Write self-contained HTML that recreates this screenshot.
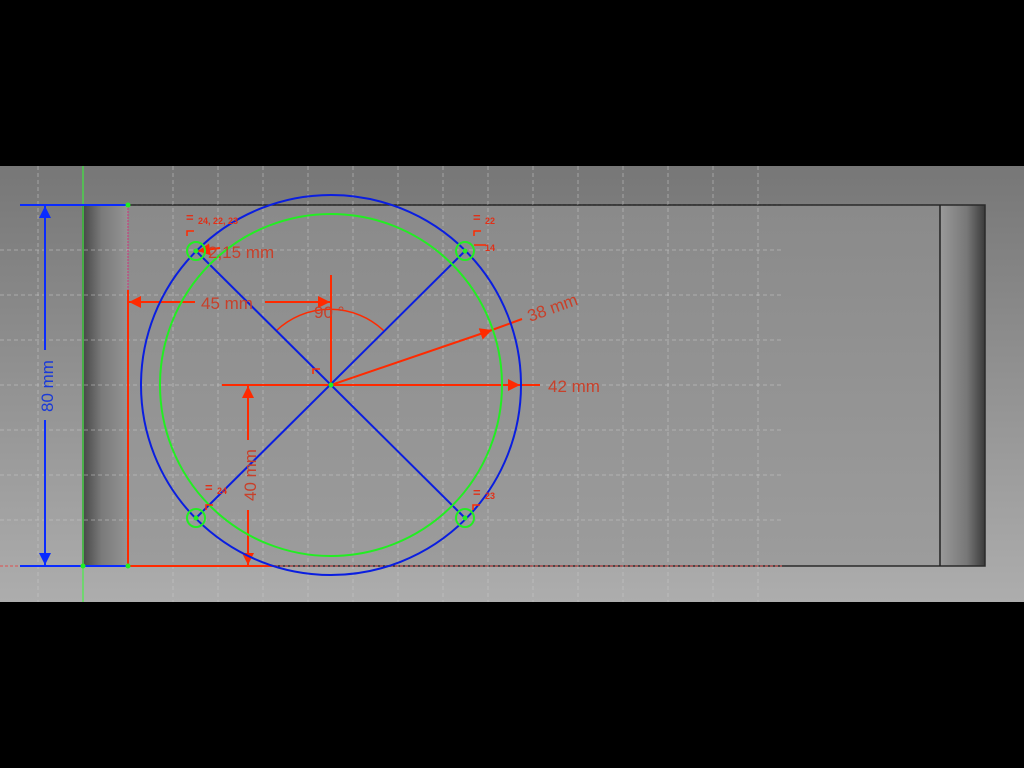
<!DOCTYPE html>
<html><head><meta charset="utf-8"><style>
html,body{margin:0;padding:0;background:#000;width:1024px;height:768px;overflow:hidden}
svg{display:block}
text{font-family:"Liberation Sans",sans-serif}
</style></head><body>
<svg width="1024" height="768" viewBox="0 0 1024 768" xmlns="http://www.w3.org/2000/svg">
<defs>
<linearGradient id="bg" x1="0" y1="0" x2="0" y2="1"><stop offset="0" stop-color="#777"/><stop offset="1" stop-color="#adadad"/></linearGradient>
<linearGradient id="face" x1="0" y1="0" x2="0" y2="1"><stop offset="0" stop-color="#8a8a8a"/><stop offset="1" stop-color="#9c9c9c"/></linearGradient>
<linearGradient id="lf" x1="0" y1="0" x2="1" y2="0"><stop offset="0" stop-color="#4a4a4a"/><stop offset="0.4" stop-color="#7a7a7a"/><stop offset="1" stop-color="#959595"/></linearGradient>
<linearGradient id="rf" x1="0" y1="0" x2="1" y2="0"><stop offset="0" stop-color="#9a9a9a"/><stop offset="0.6" stop-color="#777"/><stop offset="1" stop-color="#3a3a3a"/></linearGradient>
<marker id="ar" viewBox="0 0 10 10" refX="10" refY="5" markerWidth="12" markerHeight="12" markerUnits="userSpaceOnUse" orient="auto"><path d="M0 0L10 5L0 10z" fill="#ff2a00"/></marker>
<marker id="ab" viewBox="0 0 10 10" refX="10" refY="5" markerWidth="12" markerHeight="12" markerUnits="userSpaceOnUse" orient="auto"><path d="M0 0L10 5L0 10z" fill="#0a2cff"/></marker>
</defs>
<rect x="0" y="166" width="1024" height="436" fill="url(#bg)"/>
<rect x="83" y="205" width="902" height="361" fill="url(#face)"/>
<rect x="84" y="205" width="44" height="361" fill="url(#lf)"/>
<rect x="940" y="205" width="45" height="361" fill="url(#rf)"/>
<rect x="83" y="205" width="902" height="361" fill="none" stroke="#2a2a2a" stroke-width="1.5"/>
<line x1="940" y1="205" x2="940" y2="566" stroke="#222" stroke-width="1.5"/>
<!-- grid -->
<g stroke="#c8c8c8" stroke-opacity="0.55" stroke-dasharray="4 3" stroke-width="1">
<path d="M38 166V602M173 166V602M218 166V602M263 166V602M308 166V602M353 166V602M398 166V602M443 166V602M488 166V602M533 166V602M578 166V602M623 166V602M668 166V602M713 166V602M758 166V602"/>
<path d="M0 250H782M0 295H782M0 340H782M0 385H782M0 430H782M0 475H782M0 520H782"/>
</g>
<line x1="128" y1="205" x2="782" y2="205" stroke="#222" stroke-dasharray="3 2"/>
<line x1="0" y1="566" x2="782" y2="566" stroke="#e05050" stroke-dasharray="3 2"/>
<line x1="83" y1="166" x2="83" y2="602" stroke="#3f3" stroke-width="1"/>
<line x1="128" y1="205" x2="128" y2="290" stroke="#d0307a" stroke-dasharray="2 1"/>
<!-- blue 80 mm -->
<line x1="20" y1="205" x2="128" y2="205" stroke="#0a2cff" stroke-width="2"/>
<line x1="20" y1="566" x2="128" y2="566" stroke="#0a2cff" stroke-width="2"/>
<line x1="45" y1="350" x2="45" y2="206" stroke="#0a2cff" stroke-width="2" marker-end="url(#ab)"/>
<line x1="45" y1="420" x2="45" y2="565" stroke="#0a2cff" stroke-width="2" marker-end="url(#ab)"/>
<text x="0" y="0" transform="translate(53,386) rotate(-90)" text-anchor="middle" font-size="17" fill="#1a3ad8">80 mm</text>
<!-- red constraints -->
<g stroke="#ff2a00" stroke-width="2" fill="none">
<line x1="128" y1="290" x2="128" y2="566"/>
<line x1="128" y1="566" x2="275" y2="566"/>
<line x1="195" y1="302" x2="129" y2="302" marker-end="url(#ar)"/>
<line x1="265" y1="302" x2="330" y2="302" marker-end="url(#ar)"/>
<line x1="331" y1="275" x2="331" y2="385"/>
<line x1="222" y1="385" x2="520" y2="385" marker-end="url(#ar)"/>
<line x1="520" y1="385" x2="540" y2="385"/>
<line x1="248" y1="440" x2="248" y2="386" marker-end="url(#ar)"/>
<line x1="248" y1="510" x2="248" y2="565" marker-end="url(#ar)"/>
<line x1="331" y1="385" x2="492" y2="330" marker-end="url(#ar)"/>
<line x1="492" y1="330" x2="522" y2="319"/>
<path d="M276 331 A78 78 0 0 1 384 331" stroke-width="1.5"/>
<line x1="220" y1="248" x2="198" y2="251" marker-end="url(#ar)"/>
</g>
<!-- blue geometry -->
<g stroke="#0a1ee0" stroke-width="2" fill="none">
<circle cx="331" cy="385" r="190"/>
<line x1="196" y1="251" x2="465" y2="518"/>
<line x1="465" y1="251" x2="196" y2="518"/>
</g>
<g stroke="#22ee22" stroke-width="2" fill="none">
<circle cx="331" cy="385" r="171"/>
<circle cx="196" cy="251" r="9"/>
<circle cx="465" cy="251" r="9"/>
<circle cx="196" cy="518" r="9"/>
<circle cx="465" cy="518" r="9"/>
</g>
<g fill="#22ee22"><circle cx="331" cy="385" r="2.5"/><circle cx="196" cy="251" r="2.5"/><circle cx="465" cy="251" r="2.5"/><circle cx="196" cy="518" r="2.5"/><circle cx="465" cy="518" r="2.5"/><circle cx="128" cy="205" r="2.5"/><circle cx="128" cy="566" r="2.5"/><circle cx="83" cy="566" r="2.5"/></g>
<!-- texts -->
<g fill="#c8402a" font-size="17">
<text x="201" y="309">45 mm</text>
<text x="314" y="318">90 °</text>
<text x="548" y="392">42 mm</text>
<text x="208" y="258">2,15 mm</text>
<text transform="translate(530,322) rotate(-20)">38 mm</text>
<text transform="translate(256,475) rotate(-90)" text-anchor="middle">40 mm</text>
</g>
<g fill="#e03018" font-weight="bold">
<text x="186" y="222" font-size="13">=</text><text x="198" y="224" font-size="9">24, 22, 23</text>
<text x="473" y="222" font-size="13">=</text><text x="485" y="224" font-size="9">22</text>
<text x="485" y="251" font-size="9">14</text>
<text x="205" y="492" font-size="13">=</text><text x="217" y="494" font-size="9">24</text>
<text x="473" y="497" font-size="13">=</text><text x="485" y="499" font-size="9">23</text>
</g>
<g stroke="#ff2a00" stroke-width="1.5" fill="none">
<path d="M187 236 V231 H194"/><path d="M474 236 V231 H481"/><line x1="474" y1="245" x2="486" y2="245"/>
<path d="M313 374 V369 H320"/><path d="M206 510 V505 H213"/><path d="M473 510 V505 H480"/>
</g>
</svg>
</body></html>
